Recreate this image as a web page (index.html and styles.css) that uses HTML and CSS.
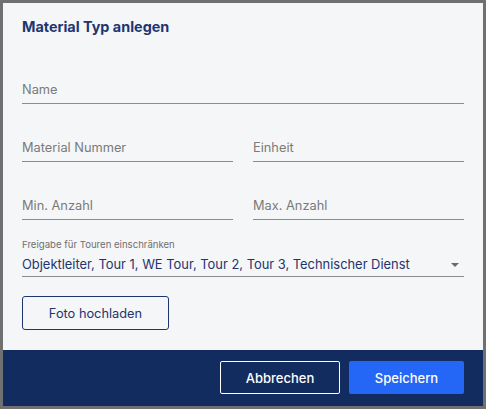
FILE: index.html
```html
<!DOCTYPE html>
<html lang="de">
<head>
<meta charset="utf-8">
<title>Material Typ anlegen</title>
<link rel="stylesheet" href="styles.css">
</head>
<body>
<div class="dialog">
  <div class="content">
    <h2 class="title">Material Typ anlegen</h2>
    <div class="form">
      <div class="field"><span class="ph">Name</span></div>
      <div class="row">
        <div class="field"><span class="ph">Material Nummer</span></div>
        <div class="field"><span class="ph">Einheit</span></div>
      </div>
      <div class="row">
        <div class="field"><span class="ph">Min. Anzahl</span></div>
        <div class="field"><span class="ph">Max. Anzahl</span></div>
      </div>
      <div class="select">
        <div class="select-label">Freigabe für Touren einschränken</div>
        <div class="select-value">
          <span>Objektleiter, Tour 1, WE Tour, Tour 2, Tour 3, Technischer Dienst</span>
          <span class="arrow"></span>
        </div>
      </div>
      <div class="upload"><button class="btn-outline">Foto hochladen</button></div>
    </div>
  </div>
  <div class="footer">
    <button class="btn-cancel">Abbrechen</button>
    <button class="btn-save">Speichern</button>
  </div>
</div>
</body>
</html>
```
FILE: styles.css
```css
* { box-sizing: border-box; }
html, body { margin: 0; padding: 0; }
body {
  background: #707070;
  font-family: Inter, "Noto Sans", sans-serif;
  width: 486px;
  height: 409px;
  overflow: hidden;
}
.dialog {
  margin: 3px;
  width: 480px;
  height: 403px;
  background: #f5f6f8;
  display: flex;
  flex-direction: column;
}
.content {
  flex: 1;
  padding: 0 19px 0 19px;
}
.title {
  margin: 15px 0 0 0;
  font-size: 14.4px;
  line-height: 18px;
  font-weight: 700;
  color: #1d3570;
}
.form {
  margin-top: 46px;
  display: flex;
  flex-direction: column;
  gap: 36px;
}
.row {
  display: grid;
  grid-template-columns: 1fr 1fr;
  column-gap: 20px;
}
.field {
  border-bottom: 1px solid #8c8c8c;
  padding-bottom: 5px;
  font-size: 12.8px;
  line-height: 16px;
}
.ph { color: #7a7a7a; }
.select {
  margin-top: -17px;
}
.select-label {
  font-size: 9.6px;
  line-height: 12px;
  color: #6f6f6f;
}
.select-value {
  margin-top: 5px;
  display: flex;
  align-items: center;
  justify-content: space-between;
  font-size: 12.9px;
  line-height: 17px;
  color: #1d3570;
  border-bottom: 1px solid #8c8c8c;
  padding-bottom: 3px;
}
.arrow {
  width: 0;
  height: 0;
  border-left: 4.5px solid transparent;
  border-right: 4.5px solid transparent;
  border-top: 4.5px solid #6a6a6a;
  margin-right: 5px;
}
.upload {
  margin-top: -17px;
}
.btn-outline {
  display: block;
  width: 147px;
  height: 34px;
  background: transparent;
  border: 1px solid #1d3570;
  border-radius: 3px;
  color: #1d3570;
  font-family: Inter, "Noto Sans", sans-serif;
  font-size: 12.8px;
  padding: 0;
}
.footer {
  height: 56px;
  background: #132c60;
  display: flex;
  justify-content: flex-end;
  align-items: flex-start;
  gap: 9px;
  padding: 11px 19px 0 0;
}
.footer button {
  height: 33px;
  font-family: Inter, "Noto Sans", sans-serif;
  font-size: 13px;
  font-weight: 500;
  border-radius: 2px;
  padding: 0;
}
.btn-cancel {
  width: 120px;
  background: transparent;
  border: 1px solid #ffffff;
  color: #ffffff;
}
.btn-save {
  width: 115px;
  background: #2466f5;
  border: none;
  color: #ffffff;
}
```
